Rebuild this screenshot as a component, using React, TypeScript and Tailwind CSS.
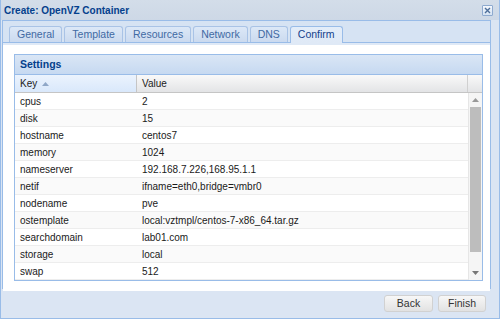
import React from 'react';

const tabs = ['General', 'Template', 'Resources', 'Network', 'DNS', 'Confirm'];

const rows: [string, string][] = [
  ['cpus', '2'],
  ['disk', '15'],
  ['hostname', 'centos7'],
  ['memory', '1024'],
  ['nameserver', '192.168.7.226,168.95.1.1'],
  ['netif', 'ifname=eth0,bridge=vmbr0'],
  ['nodename', 'pve'],
  ['ostemplate', 'local:vztmpl/centos-7-x86_64.tar.gz'],
  ['searchdomain', 'lab01.com'],
  ['storage', 'local'],
  ['swap', '512'],
];

export default function App() {
  return (
    <div className="w-[500px] h-[319px] overflow-hidden bg-[#dbe5f3] border-x border-b border-[#99bce8] flex flex-col font-['Liberation_Sans',Arial,sans-serif] text-[10px]">
      {/* title bar */}
      <div className="h-[20px] shrink-0 flex items-center justify-between pl-[3px] pr-[6px] bg-gradient-to-b from-[#d3dde9] to-[#cdd8e6]">
        <span className="font-bold text-[10px] text-[#04408c]">Create: OpenVZ Container</span>
        <button className="w-[11px] h-[11px] flex items-center justify-center bg-gradient-to-b from-[#f4f8fd] to-[#d5e2f2] border border-[#8eaacf] rounded-[1px]">
          <svg width="7" height="7" viewBox="0 0 7 7">
            <path d="M1 1 L6 6 M6 1 L1 6" stroke="#4d6e99" strokeWidth="1.4" />
          </svg>
        </button>
      </div>

      {/* tab panel */}
      <div className="ml-[1px] mr-[8px] h-[269px] shrink-0 flex flex-col border border-[#99bce8] bg-[#d6e3f3]">
        <div className="h-[24px] shrink-0 flex flex-col">
          <div className="flex-1 flex items-end gap-[2px] pl-[6px]">
            {tabs.map((t) => {
              const active = t === 'Confirm';
              return (
                <div
                  key={t}
                  className={
                    active
                      ? 'h-[17px] px-[7px] flex items-center border border-b-0 border-[#99bce8] rounded-t-[3px] bg-gradient-to-b from-[#e3edf9] to-[#dfe9f6] text-[10.5px] text-[#15428b] -mb-[1px] relative z-10'
                      : 'h-[16px] px-[7px] flex items-center border border-b-0 border-[#a9c3e6] rounded-t-[3px] bg-gradient-to-b from-[#dce8f7] to-[#cbdaef] text-[10.5px] text-[#416aa3]'
                  }
                >
                  {t}
                </div>
              );
            })}
          </div>
          <div className="h-[3px] bg-[#dfe9f6] border-t border-[#99bce8]" />
        </div>

        {/* body */}
        <div className="flex-1 bg-white pl-[11px] pr-[7px] pt-[9px] pb-[10px] flex">
          <div className="flex-1 flex flex-col border border-[#99bce8]">
            <div className="h-[20px] shrink-0 flex items-center pl-[5px] bg-gradient-to-b from-[#dae6f5] to-[#c6d9f1] border-b border-[#99bce8]">
              <span className="font-bold text-[10.5px] text-[#04408c]">Settings</span>
            </div>
            <div className="h-[18px] shrink-0 flex border-b border-[#c5c5c5] text-[#222]">
              <div className="w-[122px] flex items-center pl-[5px] gap-[5px] border-r border-[#c5c5c5] bg-gradient-to-b from-[#ebf3fd] to-[#d9e8fb]">
                <span>Key</span>
                <svg width="7" height="4" viewBox="0 0 7 4">
                  <path d="M0 4 L3.5 0 L7 4 Z" fill="#8fa7c7" />
                </svg>
              </div>
              <div className="flex-1 flex items-center pl-[5px] border-r border-[#d0d0d0] bg-gradient-to-b from-[#f9f9f9] to-[#e3e4e6]">
                Value
              </div>
              <div className="w-[14px] bg-gradient-to-b from-[#f9f9f9] to-[#e3e4e6]" />
            </div>
            <div className="flex-1 flex overflow-hidden">
              <div className="flex-1 overflow-hidden">
                {rows.map(([k, v], i) => (
                  <div
                    key={k}
                    className={`h-[17px] flex items-center border-b border-[#ededed] text-[#1a1a1a] ${i % 2 === 1 ? 'bg-[#fafafa]' : 'bg-white'}`}
                  >
                    <div className="w-[122px] pl-[5px]">{k}</div>
                    <div className="flex-1 pl-[5px]">{v}</div>
                  </div>
                ))}
              </div>
              <div className="w-[14px] flex flex-col items-center bg-[#f5f5f5] border-l border-[#e6e6e6]">
                <div className="h-[14px] flex items-center justify-center">
                  <svg width="7" height="4" viewBox="0 0 7 4">
                    <path d="M0 4 L3.5 0 L7 4 Z" fill="#999" />
                  </svg>
                </div>
                <div className="w-[11px] h-[145px] bg-[#bdbdbd]" />
                <div className="flex-1" />
                <div className="h-[14px] flex items-center justify-center">
                  <svg width="7" height="4" viewBox="0 0 7 4">
                    <path d="M0 0 L3.5 4 L7 0 Z" fill="#777" />
                  </svg>
                </div>
              </div>
            </div>
          </div>
        </div>
      </div>

      {/* buttons */}
      <div className="flex-1 flex justify-end items-start gap-[5px] pt-[6px] pr-[13px]">
        <button className="w-[49px] h-[17px] flex items-center justify-center border border-[#d1d1d1] rounded-[3px] bg-gradient-to-b from-[#f7f7f7] to-[#e2e2e2] text-[10.5px] text-[#333]">
          Back
        </button>
        <button className="w-[48px] h-[17px] flex items-center justify-center border border-[#d1d1d1] rounded-[3px] bg-gradient-to-b from-[#f7f7f7] to-[#e2e2e2] text-[10.5px] text-[#333]">
          Finish
        </button>
      </div>
    </div>
  );
}
